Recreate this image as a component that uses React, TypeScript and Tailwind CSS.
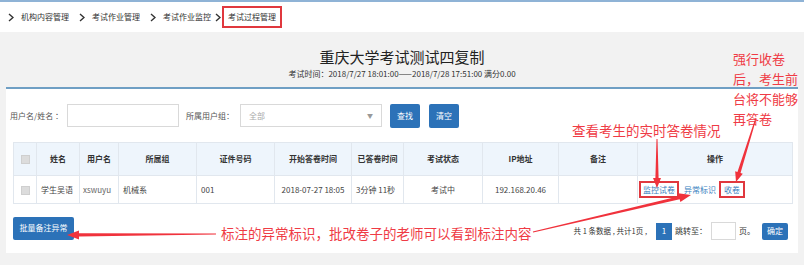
import React from 'react';

const font = { fontFamily: '"Noto Sans CJK SC", "Liberation Sans", sans-serif' };

const Chevron = () => (
  <svg width="6" height="9" viewBox="0 0 6 9" className="shrink-0">
    <polyline points="1,1 5,4.5 1,8" fill="none" stroke="#333" strokeWidth="1.4" />
  </svg>
);

// tapered annotation arrow, thin tail -> thick head
const arrowPoints = (x1: number, y1: number, x2: number, y2: number, hw = 4, hl = 10) => {
  const dx = x2 - x1;
  const dy = y2 - y1;
  const len = Math.hypot(dx, dy);
  const ux = dx / len;
  const uy = dy / len;
  const px = -uy;
  const py = ux;
  const bx = x2 - ux * hl;
  const by = y2 - uy * hl;
  const tw = 0.5;
  const nw = 1.6;
  const pts = [
    [x1 + px * tw, y1 + py * tw],
    [bx + px * nw, by + py * nw],
    [bx + px * hw, by + py * hw],
    [x2, y2],
    [bx - px * hw, by - py * hw],
    [bx - px * nw, by - py * nw],
    [x1 - px * tw, y1 - py * tw],
  ];
  return pts.map((p) => p.join(',')).join(' ');
};

const cols = [23, 43, 39, 78, 78, 77, 52, 79, 76, 79, 155];
const headers = ['', '姓名', '用户名', '所属组', '证件号码', '开始答卷时间', '已答卷时间', '考试状态', 'IP地址', '备注', '操作'];

export default function App() {
  return (
    <div className="relative w-[804px] h-[265px] overflow-hidden bg-[#f2f2f2] text-[#333]" style={font}>
      {/* breadcrumb */}
      <div className="h-[32px] bg-white border-t-2 border-[#8fb3d6] flex items-center pl-[8px] text-[8px]">
        <Chevron />
        <span className="ml-[7px] mr-[10px]">机构内容管理</span>
        <Chevron />
        <span className="ml-[7px] mr-[10px]">考试作业管理</span>
        <Chevron />
        <span className="ml-[7px] mr-[4px]">考试作业监控</span>
        <Chevron />
        <span className="ml-[1px] h-[22px] px-[4px] flex items-center border-2 border-[#e0383e]">考试过程管理</span>
      </div>

      {/* title */}
      <div className="h-[55px] flex flex-col items-center pt-[15px]">
        <div className="text-[15px] leading-[20px] text-[#222]">重庆大学考试测试四复制</div>
        <div className="text-[8px] leading-[11px] mt-[1px]">考试时间：2018/7/27 18:01:00——2018/7/28 17:51:00 满分0.00</div>
      </div>

      {/* panel */}
      <div className="mx-[6px] h-[166px] bg-white border-t-2 border-[#6f9fc4] px-[7px] pt-[15px]">
        <div className="flex items-center h-[23px] text-[8px] text-[#555]">
          <span className="ml-[-3px] w-[57px]">用户名/姓名 ：</span>
          <div className="w-[112px] h-[23px] border border-[#d9d9d9] bg-white" />
          <span className="ml-[7px] w-[54px]">所属用户组：</span>
          <div className="w-[142px] h-[23px] border border-[#d9d9d9] bg-white flex items-center justify-between px-[8px] text-[#aaa]">
            <span>全部</span>
            <span className="text-[6px] text-[#999]">▼</span>
          </div>
          <button className="ml-[8px] w-[30px] h-[24px] bg-[#2c72b8] text-white text-[8px] rounded-[2px]">查找</button>
          <button className="ml-[9px] w-[30px] h-[24px] bg-[#2c72b8] text-white text-[8px] rounded-[2px]">清空</button>
        </div>

        <table className="mt-[15px] w-[779px] table-fixed border-collapse text-[8px]">
          <colgroup>
            {cols.map((w, i) => (
              <col key={i} style={{ width: w }} />
            ))}
          </colgroup>
          <thead>
            <tr className="h-[33px] bg-[#eef5fc]">
              {headers.map((h, i) => (
                <th key={i} className="border border-[#e1e7ee] font-bold text-center text-[#333]">
                  {i === 0 ? (
                    <span className="inline-block w-[9px] h-[9px] bg-[#dcdcdc] border border-[#cfcfcf] align-middle" />
                  ) : (
                    h
                  )}
                </th>
              ))}
            </tr>
          </thead>
          <tbody>
            <tr className="h-[28px] text-[#444]">
              <td className="border border-[#e1e7ee] text-center">
                <span className="inline-block w-[9px] h-[9px] bg-[#dcdcdc] border border-[#cfcfcf] align-middle" />
              </td>
              <td className="border border-[#e1e7ee] pl-[4px]">学生吴语</td>
              <td className="border border-[#e1e7ee] pl-[3px] text-[#666]">xswuyu</td>
              <td className="border border-[#e1e7ee] pl-[4px]">机械系</td>
              <td className="border border-[#e1e7ee] pl-[4px]">001</td>
              <td className="border border-[#e1e7ee] text-center">2018-07-27 18:05</td>
              <td className="border border-[#e1e7ee] pl-[4px]">3分钟 11秒</td>
              <td className="border border-[#e1e7ee] text-center">考试中</td>
              <td className="border border-[#e1e7ee] text-center">192.168.20.46</td>
              <td className="border border-[#e1e7ee]" />
              <td className="border border-[#e1e7ee]">
                <div className="flex items-center pl-[1px] text-[#3a7fc0]">
                  <span className="h-[17px] px-[2px] flex items-center border-2 border-[#e0383e]">监控试卷</span>
                  <span className="ml-[5px]">异常标识</span>
                  <span className="ml-[3px] h-[17px] px-[3px] flex items-center border-2 border-[#e0383e]">收卷</span>
                </div>
              </td>
            </tr>
          </tbody>
        </table>

        <div className="mt-[12px] flex items-center justify-between text-[8px]">
          <button className="w-[61px] h-[23px] bg-[#2c72b8] text-white rounded-[2px]">批量备注异常</button>
          <div className="flex items-center mr-[3px] mt-[6px] text-[#333]">
            <span className="text-[7.5px]">共 1 条数据 , 共计1页 ,</span>
            <span className="ml-[9px] w-[16px] h-[17px] bg-[#2c72b8] text-white flex items-center justify-center">1</span>
            <span className="ml-[3px]">跳转至：</span>
            <div className="ml-[4px] w-[25px] h-[18px] border border-[#d9d9d9] bg-white" />
            <span className="ml-[3px]">页。</span>
            <button className="ml-[7px] w-[26px] h-[17px] bg-[#2c72b8] text-white rounded-[2px]">确定</button>
          </div>
        </div>
      </div>

      {/* annotations */}
      <div className="absolute left-[733px] top-[49px] w-[70px] text-[13px] leading-[20px] text-[#ef3b45]">
        强行收卷
        <br />
        后，考生前
        <br />
        台将不能够
        <br />
        再答卷
      </div>
      <div className="absolute left-[572px] top-[121px] text-[13.5px] leading-[18px] text-[#ef3b45]">查看考生的实时答卷情况</div>
      <div className="absolute left-[221px] top-[224px] text-[13.5px] leading-[18px] text-[#ef3b45]">
        标注的异常标识，批改卷子的老师可以看到标注内容
      </div>

      <svg className="absolute inset-0 pointer-events-none" width="804" height="265">
        <polygon points={arrowPoints(657, 139, 657, 188)} fill="#f0323c" />
        <polygon points={arrowPoints(756, 118, 736, 182)} fill="#f0323c" />
        <polygon points={arrowPoints(533, 232, 691, 195, 4.5, 12)} fill="#f0323c" />
        <polygon points={arrowPoints(216, 234, 67, 235, 4.5, 12)} fill="#f0323c" />
      </svg>
    </div>
  );
}
